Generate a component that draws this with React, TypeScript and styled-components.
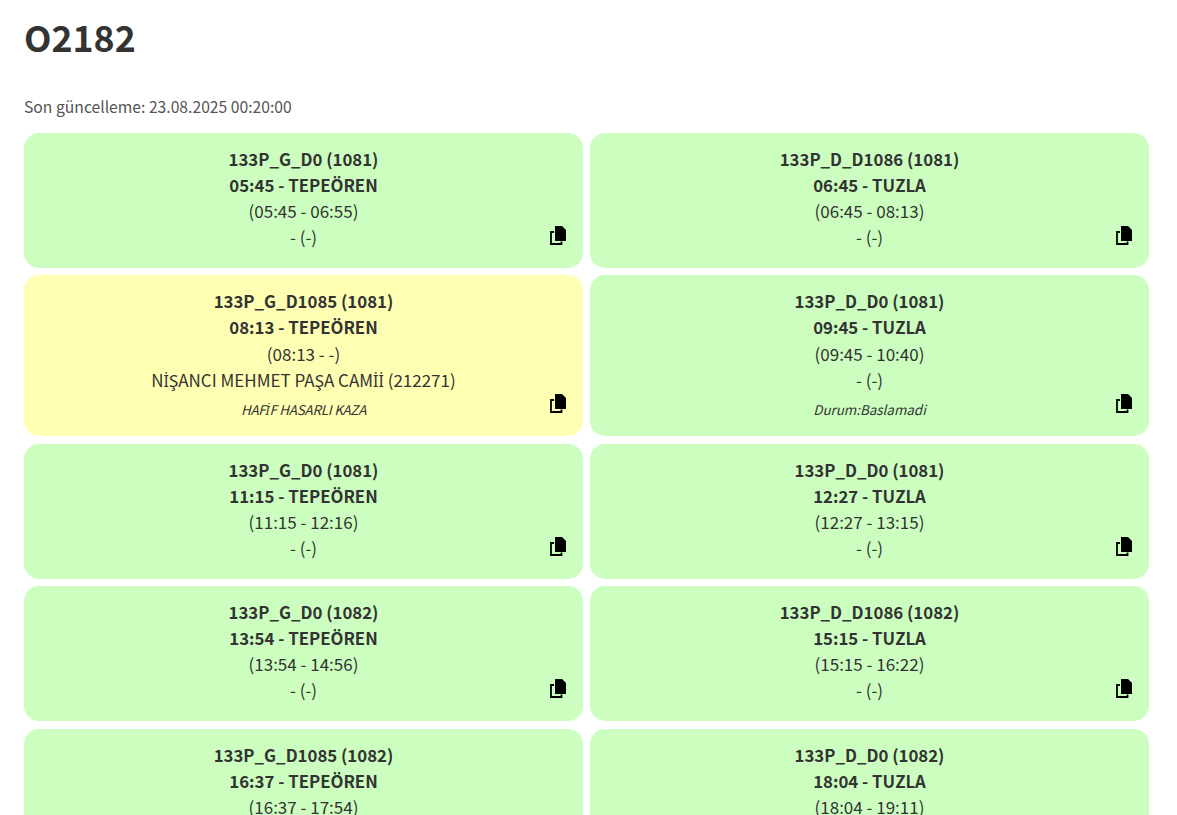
import React from "react";
import styled, { createGlobalStyle } from "styled-components";

const Global = createGlobalStyle`
  html, body { margin: 0; padding: 0; background: #fff; }
  body { font-family: "Noto Sans CJK SC", "Noto Sans", sans-serif; color: #333; height: 815px; overflow: hidden; }
`;

const Page = styled.main`
  padding: 0 28px 0 24px;
`;

const Title = styled.h1`
  margin: 0;
  padding-top: 12px;
  font-size: 35.7px;
  line-height: 50px;
  font-weight: 700;
  color: #333;
`;

const Updated = styled.p`
  margin: 32px 0 0;
  font-size: 15.7px;
  line-height: 26px;
  color: #555;
`;

const Grid = styled.div`
  display: grid;
  grid-template-columns: 559px 559px;
  column-gap: 7px;
  row-gap: 7.6px;
  margin-top: 13px;
`;

const Card = styled.article<{ $tone: "green" | "yellow" }>`
  position: relative;
  padding: 13px 15px 17.4px;
  border-radius: 15px;
  background: ${(p) => (p.$tone === "yellow" ? "#ffffb3" : "#ccffbf")};
  text-align: center;
  font-size: 17px;
  line-height: 26.1px;
  color: #333;
`;

const Strong = styled.div`
  font-size: 16.8px;
  font-weight: 700;
`;

const Line = styled.div``;

const Note = styled.div<{ $caps: boolean }>`
  padding-top: 6px;
  font-size: 13.4px;
  line-height: 20.1px;
  font-style: italic;
  letter-spacing: ${(p) => (p.$caps ? "-0.22px" : "0")};
`;

const DottedCap = styled.span`
  font-family: "Noto Sans", sans-serif;
  font-size: 0.93em;
  line-height: 0;
`;

const CopyButton = styled.span`
  position: absolute;
  right: 17px;
  bottom: 24px;
  width: 16px;
  height: 19px;
  display: block;
`;

const CopyIcon = () => (
  <CopyButton>
    <svg width="16" height="19" viewBox="0 0 16 19" fill="none">
      <path d="M5 0h7l4 4v11H5z" fill="#000" />
      <path d="M4 6H1v12h10.5v-2.5" stroke="#000" strokeWidth="1.8" />
    </svg>
  </CopyButton>
);

const Turkish = ({ text }: { text: string }) => (
  <>
    {text.split(/(\u0130)/).map((part, i) =>
      part === "\u0130" ? <DottedCap key={i}>{part}</DottedCap> : part
    )}
  </>
);

type Trip = { a: string; b: string; c: string; d: string; note?: string; tone?: "green" | "yellow" };

const trips: Trip[] = [
  { a: "133P_G_D0 (1081)", b: "05:45 - TEPEÖREN", c: "(05:45 - 06:55)", d: "- (-)" },
  { a: "133P_D_D1086 (1081)", b: "06:45 - TUZLA", c: "(06:45 - 08:13)", d: "- (-)" },
  { a: "133P_G_D1085 (1081)", b: "08:13 - TEPEÖREN", c: "(08:13 - -)", d: "NİŞANCI MEHMET PAŞA CAMİİ (212271)", note: "HAFİF HASARLI KAZA", tone: "yellow" },
  { a: "133P_D_D0 (1081)", b: "09:45 - TUZLA", c: "(09:45 - 10:40)", d: "- (-)", note: "Durum:Baslamadi" },
  { a: "133P_G_D0 (1081)", b: "11:15 - TEPEÖREN", c: "(11:15 - 12:16)", d: "- (-)" },
  { a: "133P_D_D0 (1081)", b: "12:27 - TUZLA", c: "(12:27 - 13:15)", d: "- (-)" },
  { a: "133P_G_D0 (1082)", b: "13:54 - TEPEÖREN", c: "(13:54 - 14:56)", d: "- (-)" },
  { a: "133P_D_D1086 (1082)", b: "15:15 - TUZLA", c: "(15:15 - 16:22)", d: "- (-)" },
  { a: "133P_G_D1085 (1082)", b: "16:37 - TEPEÖREN", c: "(16:37 - 17:54)", d: "- (-)" },
  { a: "133P_D_D0 (1082)", b: "18:04 - TUZLA", c: "(18:04 - 19:11)", d: "- (-)" },
];

export default function App() {
  return (
    <Page>
      <Global />
      <Title>O2182</Title>
      <Updated>Son güncelleme: 23.08.2025 00:20:00</Updated>
      <Grid>
        {trips.map((t, i) => (
          <Card key={i} $tone={t.tone ?? "green"}>
            <Strong>{t.a}</Strong>
            <Strong>{t.b}</Strong>
            <Line>{t.c}</Line>
            <Line><Turkish text={t.d} /></Line>
            {t.note && <Note $caps={t.note === t.note.toUpperCase()}><Turkish text={t.note} /></Note>}
            <CopyIcon />
          </Card>
        ))}
      </Grid>
    </Page>
  );
}
